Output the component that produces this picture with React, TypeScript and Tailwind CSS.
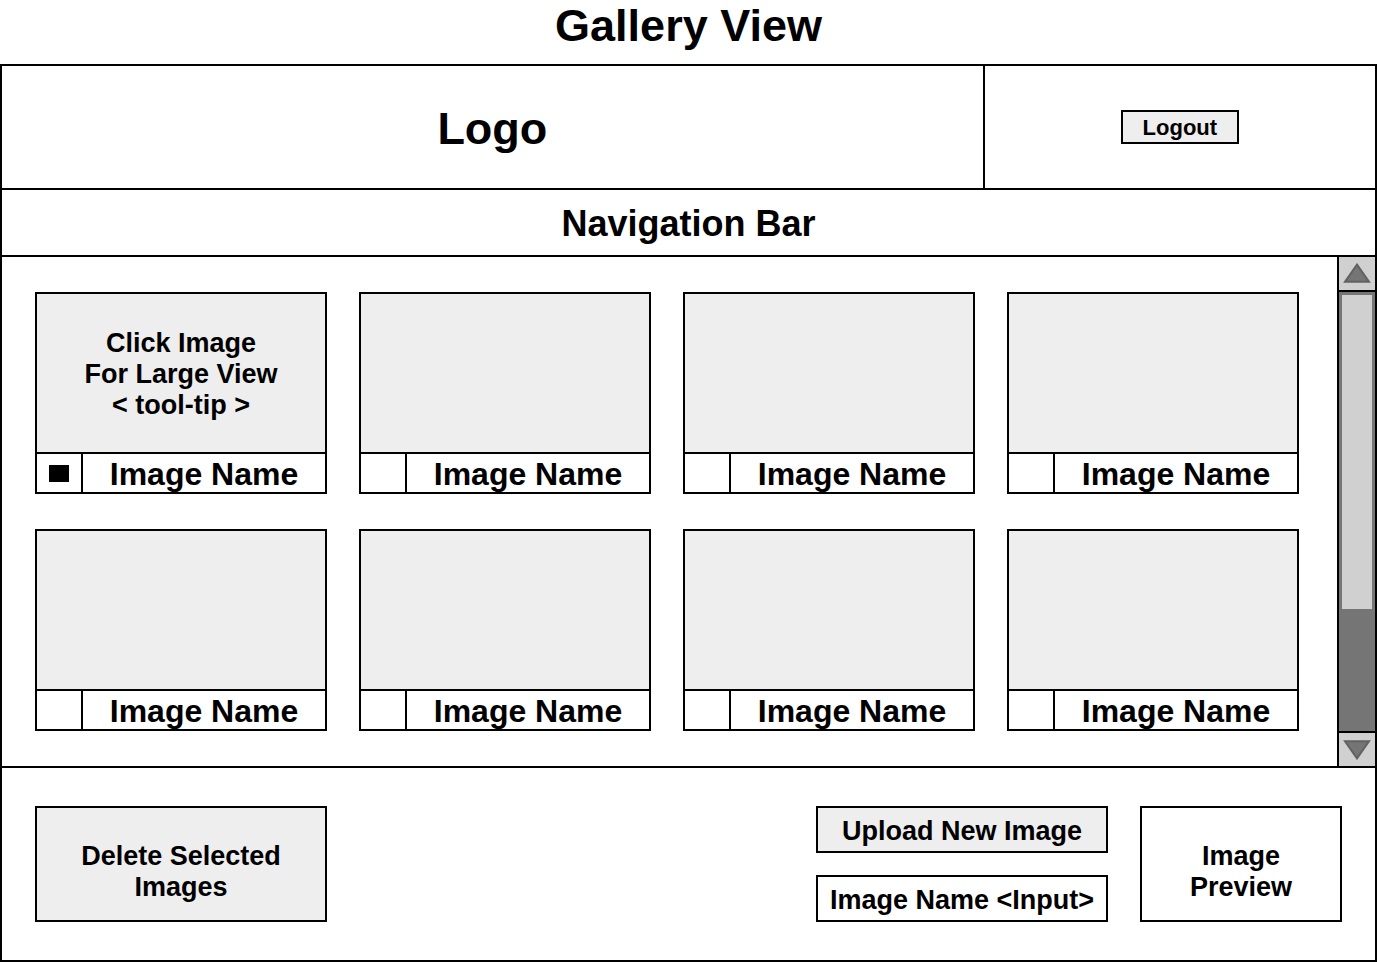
import { useState } from "react";

const IMAGE_COUNT = 8;

function ImageCard({ id, tip }: { id: number; tip?: string[] }) {
  const [selected, setSelected] = useState(id === 0);
  return (
    <li className="border-2 border-black">
      <button
        type="button"
        aria-label={tip ? undefined : `View image ${id + 1}`}
        className="flex h-[158px] w-full flex-col items-center justify-center bg-[#eeeeee] pt-0.5 text-[27px] leading-[31px]"
      >
        {tip?.map((line) => (
          <span key={line} className="block">
            {line}
          </span>
        ))}
      </button>
      <div className="flex h-10 border-t-2 border-black">
        <div className="flex w-[46px] shrink-0 items-center justify-center border-r-2 border-black">
          <input
            id={`image-${id}`}
            type="checkbox"
            checked={selected}
            onChange={(e) => setSelected(e.target.checked)}
            className="h-[17px] w-5 appearance-none checked:bg-black"
          />
        </div>
        <label
          htmlFor={`image-${id}`}
          className="flex grow items-center justify-center pt-0.5 text-[32px] leading-9 whitespace-nowrap"
        >
          Image Name
        </label>
      </div>
    </li>
  );
}

function ScrollBar() {
  return (
    <div className="flex w-[38px] shrink-0 flex-col border-l-2 border-black bg-[#757575]">
      <button
        type="button"
        aria-label="Scroll up"
        className="flex h-[35px] items-center justify-center border-b-2 border-black bg-[#d0d0d0] pb-0.5"
      >
        <svg width="28" height="20" viewBox="0 0 28 20" aria-hidden="true">
          <path d="M14 1.6 26 18.8H2Z" fill="#757575" stroke="#626262" strokeWidth="2" />
        </svg>
      </button>
      <div className="grow p-[3px]">
        <div className="h-[314px] bg-[#d0d0d0]" />
      </div>
      <button
        type="button"
        aria-label="Scroll down"
        className="flex h-[35px] items-center justify-center border-t-2 border-black bg-[#d0d0d0]"
      >
        <svg width="28" height="20" viewBox="0 0 28 20" aria-hidden="true">
          <path d="M14 18.4 26 1.2H2Z" fill="#757575" stroke="#626262" strokeWidth="2" />
        </svg>
      </button>
    </div>
  );
}

export default function App() {
  return (
    <div className="flex min-h-screen flex-col bg-white font-['Liberation_Sans',Arial,sans-serif] font-bold text-black">
      <h1 className="pb-3 text-center text-[45px] leading-[52px]">Gallery View</h1>
      <div className="flex grow flex-col border-2 border-black">
        <header className="grid h-[124px] grid-cols-[5fr_2fr] border-b-2 border-black">
          <div className="flex items-center justify-center pt-1 text-[45px]">Logo</div>
          <div className="flex items-center justify-center border-l-2 border-black">
            <button
              type="button"
              className="h-[34px] w-[118px] border-2 border-black bg-[#eeeeee] pt-0.5 text-[22px] leading-7"
            >
              Logout
            </button>
          </div>
        </header>
        <nav className="flex h-[67px] items-center justify-center border-b-2 border-black pt-0.5 text-[36px]">
          Navigation Bar
        </nav>
        <main className="flex border-b-2 border-black">
          <ul className="grid grow grid-cols-4 gap-x-8 gap-y-[35px] py-[35px] pr-[38px] pl-[33px]">
            {Array.from({ length: IMAGE_COUNT }, (_, i) => (
              <ImageCard
                key={i}
                id={i}
                tip={i === 0 ? ["Click Image", "For Large View", "< tool-tip >"] : undefined}
              />
            ))}
          </ul>
          <ScrollBar />
        </main>
        <footer className="flex gap-8 px-[33px] py-[38px] text-[27px] leading-[31px]">
          <button
            type="button"
            className="mr-auto h-[116px] w-[292px] border-2 border-black bg-[#eeeeee] px-8 pt-4"
          >
            Delete Selected Images
          </button>
          <div className="flex w-[292px] flex-col justify-between">
            <button type="button" className="h-[47px] border-2 border-black bg-[#eeeeee] pt-1">
              Upload New Image
            </button>
            <input
              type="text"
              aria-label="Image name"
              placeholder="Image Name <Input>"
              className="h-[47px] w-full border-2 border-black pt-1 text-center placeholder:text-black placeholder:opacity-100"
            />
          </div>
          <div className="flex h-[116px] w-[202px] items-center justify-center border-2 border-black px-8 pt-4 text-center">
            Image Preview
          </div>
        </footer>
      </div>
    </div>
  );
}
